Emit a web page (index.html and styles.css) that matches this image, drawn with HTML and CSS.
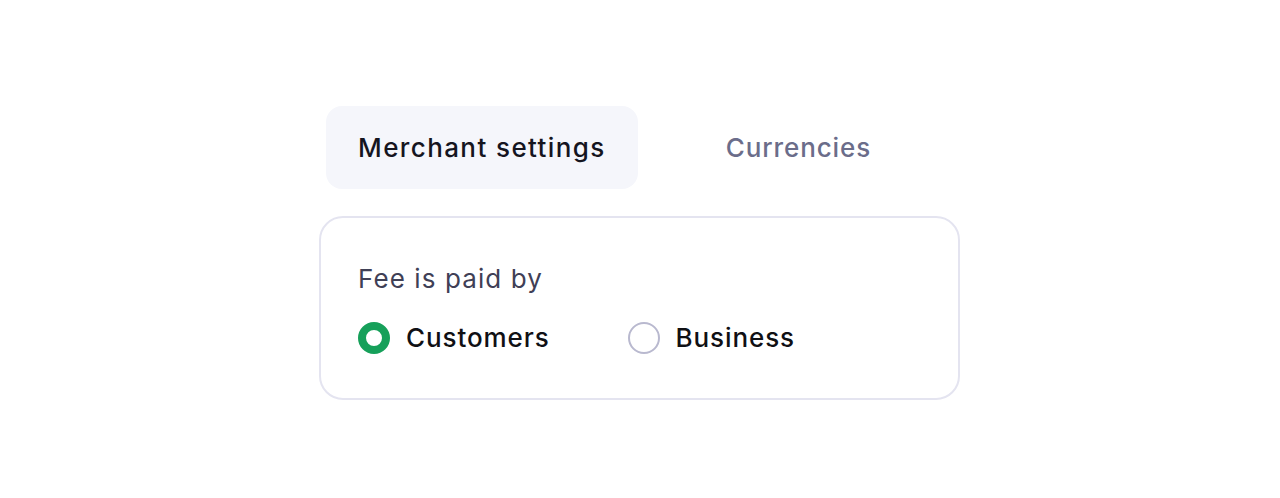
FILE: index.html
```
<!DOCTYPE html>
<html>
	<head>
		<meta charset="utf-8">
		<link rel="stylesheet" href="styles.css">
	</head>
	<body>
		<main class="settings">
			<nav class="tabs">
				<a class="tab active">Merchant settings</a>
				<a class="tab">Currencies</a>
			</nav>
			<section class="card">
				<h2 class="label">Fee is paid by</h2>
				<div class="options">
					<label class="option"><span class="radio checked"></span>Customers</label>
					<label class="option"><span class="radio"></span>Business</label>
				</div>
			</section>
		</main>
	</body>
</html>
```
FILE: styles.css
```
body {
	margin: 0;
	padding: 7px 1px 0 0;
	height: 491px;
	font-family: Inter, "Noto Sans", sans-serif;
	background: #fff;
	display: flex;
	align-items: center;
	justify-content: center;
}
.settings {
	width: 641px;
	display: flex;
	flex-direction: column;
	gap: 27px;
}
.tabs {
	display: flex;
	gap: 56px;
	padding-left: 7px;
}
.tab {
	display: block;
	padding: 0 32px;
	height: 83px;
	line-height: 84px;
	border-radius: 16px;
	font-size: 26px;
	font-weight: 500;
	color: #6b6d8a;
	letter-spacing: 0.9px;
}
.tab.active {
	background: #f5f6fb;
	color: #15151f;
	letter-spacing: 1.4px;
}
.card {
	border: 2px solid #e4e4f0;
	border-radius: 24px;
	padding: 46px 38px 44px 37px;
}
.label {
	margin: 0;
	font-size: 26px;
	font-weight: 400;
	color: #3f4056;
	line-height: 30px;
	letter-spacing: 1.1px;
}
.options {
	display: flex;
	gap: 78px;
	margin-top: 28px;
}
.option {
	display: flex;
	align-items: center;
	gap: 16px;
	font-size: 26px;
	font-weight: 500;
	color: #101014;
	line-height: 32px;
	letter-spacing: 0.9px;
}
.radio {
	width: 28px;
	height: 28px;
	border: 2px solid #b9b9cf;
	border-radius: 50%;
}
.radio.checked {
	width: 16px;
	height: 16px;
	border: 8px solid #16a05a;
}
```
